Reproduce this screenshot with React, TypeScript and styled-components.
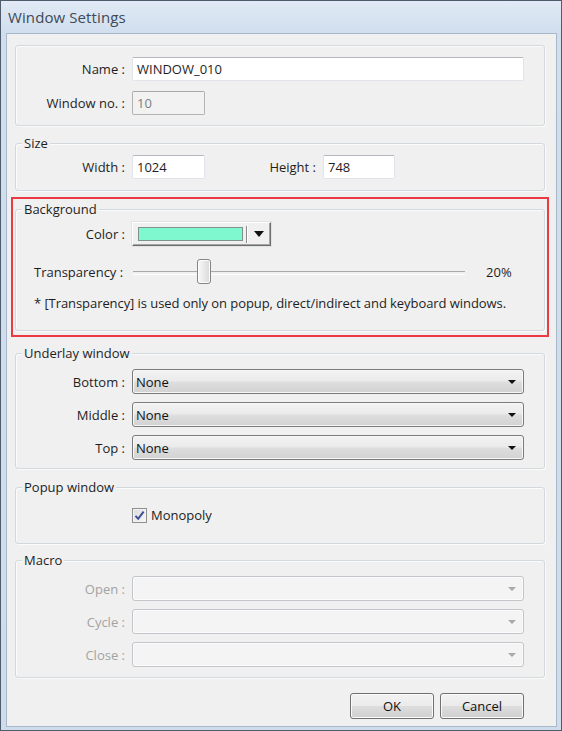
import React from "react";
import styled, { createGlobalStyle } from "styled-components";

const GlobalStyle = createGlobalStyle`
  html, body { margin: 0; padding: 0; background: #ffffff; }
  body {
    font-family: "Open Sans", "Noto Sans", sans-serif;
    font-size: 13px;
    color: #1e1e1e;
  }
  * { box-sizing: border-box; }
`;

const Frame = styled.div`
  width: 562px;
  height: 731px;
  border: 1px solid #4d5d6e;
  background: linear-gradient(#e1eaf5 0px, #d0deee 32px, #cfdcec 100%);
  display: flex;
  flex-direction: column;
`;

const TitleBar = styled.div`
  height: 32px;
  flex: none;
  display: flex;
  align-items: center;
  padding-left: 7px;
  font-size: 15px;
  letter-spacing: 0.1px;
  color: #3f4a56;
`;

const Client = styled.div`
  flex: 1;
  margin: 0 4px 3px 5px;
  border: 1px solid #a9b8c8;
  background: #f0f0f0;
  display: flex;
  flex-direction: column;
  padding: 11px 11px 0 8px;
`;

const Group = styled.fieldset<{ $pt: number; $pb: number; $mt?: number }>`
  margin: ${(p) => p.$mt ?? 0}px 0 0 0;
  min-width: 0;
  border: 1px solid #d3d8dc;
  border-radius: 3px;
  box-shadow: inset 1px 1px 0 #fbfbfb, 1px 1px 0 #fbfbfb;
  padding: ${(p) => p.$pt}px 20px ${(p) => p.$pb}px 0;
`;

const Legend = styled.legend`
  margin-left: 6px;
  padding: 0 2px;
  line-height: 18px;
  background: #f0f0f0;
  color: #1e1e1e;
`;

const Stack = styled.div<{ $gap: number }>`
  display: flex;
  flex-direction: column;
  gap: ${(p) => p.$gap}px;
`;

const Row = styled.div<{ $h: number }>`
  display: flex;
  align-items: center;
  height: ${(p) => p.$h}px;
`;

const Label = styled.span<{ $w?: number; $disabled?: boolean }>`
  flex: none;
  width: ${(p) => p.$w ?? 109}px;
  margin-right: 7px;
  text-align: right;
  white-space: nowrap;
  color: ${(p) => (p.$disabled ? "#a3a3a3" : "#1e1e1e")};
`;

const TextBox = styled.div<{ $w?: number; $disabled?: boolean }>`
  ${(p) => (p.$w ? `width: ${p.$w}px; flex: none;` : "flex: 1;")}
  height: 24px;
  display: flex;
  align-items: center;
  padding-left: 4px;
  border: 1px solid ${(p) => (p.$disabled ? "#b3b3b3" : "#e0e4ea")};
  border-top-color: ${(p) => (p.$disabled ? "#a8a8a8" : "#b5b8bf")};
  border-radius: 2px;
  background: ${(p) => (p.$disabled ? "#f2f2f2" : "#ffffff")};
  color: ${(p) => (p.$disabled ? "#7d7d7d" : "#1e1e1e")};
`;

const Combo = styled.div<{ $disabled?: boolean }>`
  flex: 1;
  height: 25px;
  display: flex;
  align-items: center;
  justify-content: space-between;
  padding: 0 7px 0 3px;
  border: 1px solid ${(p) => (p.$disabled ? "#c2c6ca" : "#7b7b7b")};
  border-radius: 3px;
  background: ${(p) =>
    p.$disabled
      ? "#f4f4f4"
      : "linear-gradient(#f3f3f3 0%, #ebebeb 45%, #dddddd 55%, #d2d2d2 100%)"};
  box-shadow: inset 0 0 0 1px ${(p) => (p.$disabled ? "#fbfbfb" : "#f7f7f7")};
  color: #111;
`;

const Arrow = styled.span<{ $color?: string; $w?: number }>`
  width: 0;
  height: 0;
  border-left: ${(p) => (p.$w ?? 8) / 2}px solid transparent;
  border-right: ${(p) => (p.$w ?? 8) / 2}px solid transparent;
  border-top: ${(p) => Math.round((p.$w ?? 8) / 2)}px solid ${(p) => p.$color ?? "#111"};
`;

const Highlight = styled.div`
  margin: 6px -4px 0 -4px;
  border: 2px solid #ec3a42;
  padding: 1px 2px 4px 2px;
`;

const ColorButton = styled.div`
  width: 139px;
  height: 24px;
  flex: none;
  display: flex;
  align-items: center;
  padding-left: 5px;
  background: #f0f0f0;
  border: 1px solid;
  border-color: #ffffff #6e6e6e #6e6e6e #ffffff;
  box-shadow: inset -1px -1px 0 #a5a5a5, 0 0 0 1px #e3e3e3;
`;

const Swatch = styled.span<{ $color: string }>`
  width: 105px;
  height: 14px;
  background: ${(p) => p.$color};
  border: 1px solid #7f918b;
`;

const Divider = styled.span`
  width: 2px;
  height: 17px;
  margin: 0 6px 0 3px;
  border-left: 1px solid #8c8c8c;
  border-right: 1px solid #ffffff;
`;

const SliderRow = styled.div`
  display: flex;
  align-items: center;
  height: 25px;
  padding-left: 18px;
`;

const SliderLabel = styled.span`
  width: 99px;
  flex: none;
  white-space: nowrap;
`;

const Track = styled.div`
  position: relative;
  width: 332px;
  height: 25px;
  flex: none;
  &::before {
    content: "";
    position: absolute;
    left: 0;
    right: 0;
    top: 12px;
    height: 2px;
    border-top: 1px solid #a9a9a9;
    border-bottom: 1px solid #ffffff;
  }
`;

const Thumb = styled.span`
  position: absolute;
  top: 0;
  width: 14px;
  height: 25px;
  border: 1px solid #858585;
  border-radius: 3px;
  background: linear-gradient(90deg, #f9f9f9, #e6e6e6 60%, #d9d9d9);
  box-shadow: inset 0 0 0 1px #fdfdfd;
`;

const Value = styled.span`
  margin-left: 21px;
`;

const Note = styled.div`
  padding-left: 18px;
  line-height: 16px;
  letter-spacing: -0.07px;
  white-space: nowrap;
`;

const CheckBox = styled.span`
  width: 15px;
  height: 15px;
  flex: none;
  display: flex;
  align-items: center;
  justify-content: center;
  border: 1px solid #8e8f8f;
  background: linear-gradient(135deg, #dcdcdc, #f6f6f6);
  box-shadow: inset 0 0 0 1px #f4f4f4;
  margin-right: 4px;
`;

const Buttons = styled.div`
  display: flex;
  justify-content: flex-end;
  gap: 6px;
  margin: 15px 21px 0 0;
`;

const Button = styled.div`
  width: 84px;
  height: 26px;
  display: flex;
  align-items: center;
  justify-content: center;
  border: 1px solid #707070;
  border-radius: 3px;
  background: linear-gradient(#f2f2f2 0%, #ebebeb 48%, #dddddd 52%, #cfcfcf 100%);
  box-shadow: inset 0 0 0 1px #fbfbfb;
  color: #111;
`;

const Check = () => (
  <svg width="11" height="11" viewBox="0 0 11 11">
    <path d="M1.5 5.8 L4.2 8.8 L9.6 1.6" fill="none" stroke="#3b4d94" strokeWidth="2" />
  </svg>
);

const underlay = ["Bottom", "Middle", "Top"];
const macros = ["Open", "Cycle", "Close"];

export default function App() {
  const transparency = 20;
  const thumbLeft = Math.round((transparency / 100) * (332 - 14));

  return (
    <>
      <GlobalStyle />
      <Frame>
        <TitleBar>Window Settings</TitleBar>
        <Client>
          <Group $pt={11} $pb={10}>
            <Stack $gap={10}>
              <Row $h={24}>
                <Label>Name :</Label>
                <TextBox>WINDOW_010</TextBox>
              </Row>
              <Row $h={24}>
                <Label>Window no. :</Label>
                <TextBox $w={73} $disabled>10</TextBox>
              </Row>
            </Stack>
          </Group>

          <Group $mt={8} $pt={3} $pb={11}>
            <Legend>Size</Legend>
            <Row $h={24}>
              <Label>Width :</Label>
              <TextBox $w={73}>1024</TextBox>
              <Label $w={111}>Height :</Label>
              <TextBox $w={72}>748</TextBox>
            </Row>
          </Group>

          <Highlight>
            <Group $pt={4} $pb={19}>
              <Legend>Background</Legend>
              <Row $h={24}>
                <Label>Color :</Label>
                <ColorButton>
                  <Swatch $color="#7ff8d0" />
                  <Divider />
                  <Arrow $w={11} />
                </ColorButton>
              </Row>
              <Stack $gap={11} style={{ marginTop: 13 }}>
                <SliderRow>
                  <SliderLabel>Transparency :</SliderLabel>
                  <Track>
                    <Thumb style={{ left: thumbLeft }} />
                  </Track>
                  <Value>{transparency}%</Value>
                </SliderRow>
                <Note>
                  * [Transparency] is used only on popup, direct/indirect and keyboard windows.
                </Note>
              </Stack>
            </Group>
          </Highlight>

          <Group $mt={7} $pt={7} $pb={8}>
            <Legend>Underlay window</Legend>
            <Stack $gap={8}>
              {underlay.map((name) => (
                <Row $h={25} key={name}>
                  <Label>{name} :</Label>
                  <Combo>
                    None
                    <Arrow />
                  </Combo>
                </Row>
              ))}
            </Stack>
          </Group>

          <Group $mt={9} $pt={11} $pb={20}>
            <Legend>Popup window</Legend>
            <Row $h={16}>
              <Label />
              <CheckBox>
                <Check />
              </CheckBox>
              Monopoly
            </Row>
          </Group>

          <Group $mt={7} $pt={7} $pb={10}>
            <Legend>Macro</Legend>
            <Stack $gap={8}>
              {macros.map((name) => (
                <Row $h={25} key={name}>
                  <Label $disabled>{name} :</Label>
                  <Combo $disabled>
                    <span />
                    <Arrow $color="#a8a8a8" />
                  </Combo>
                </Row>
              ))}
            </Stack>
          </Group>

          <Buttons>
            <Button>OK</Button>
            <Button>Cancel</Button>
          </Buttons>
        </Client>
      </Frame>
    </>
  );
}
